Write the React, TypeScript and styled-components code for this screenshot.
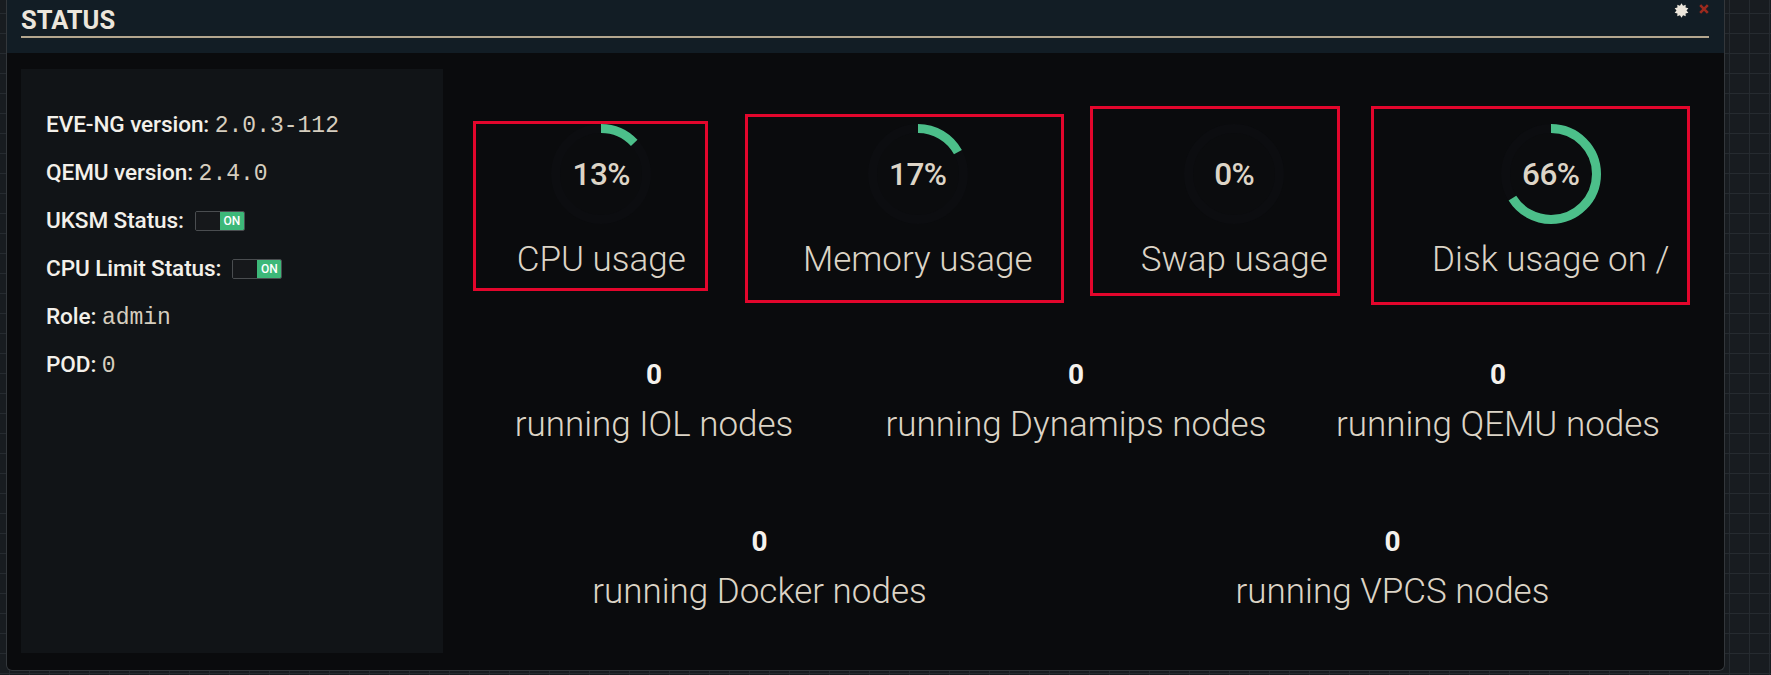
import React from "react";
import styled, { createGlobalStyle } from "styled-components";

const GlobalStyle = createGlobalStyle`
  html, body {
    margin: 0;
    padding: 0;
  }
  body {
    width: 1771px;
    height: 675px;
    overflow: hidden;
    background-color: #181c20;
    background-image:
      linear-gradient(#262b30 1px, transparent 1px),
      linear-gradient(90deg, #262b30 1px, transparent 1px);
    background-size: 20px 20px;
    background-position: 9px 13px;
    font-family: Roboto, "Liberation Sans", sans-serif;
  }
  * { box-sizing: border-box; }
`;

const Panel = styled.section`
  margin-left: 6px;
  width: 1719px;
  height: 671px;
  border: 1px solid #33373b;
  border-top: none;
  border-radius: 0 0 6px 6px;
  overflow: hidden;
  display: flex;
  flex-direction: column;
  background: #0a0b0d;
`;

const Header = styled.header`
  position: relative;
  height: 53px;
  flex: none;
  background: #121d25;
  padding: 5px 15px 0 14px;
`;

const Title = styled.h2`
  margin: 0;
  font-family: Roboto, "Liberation Sans", sans-serif;
  font-weight: 700;
  font-size: 25.5px;
  line-height: 30px;
  color: #ece6dc;
  padding-bottom: 1px;
  border-bottom: 2px solid #b3a68e;
`;

const Tools = styled.div`
  position: absolute;
  top: 2px;
  right: 15px;
  display: flex;
  align-items: flex-start;
  gap: 10px;
`;

const Body = styled.div`
  flex: 1;
  display: grid;
  grid-template-columns: 422px 1fr;
  padding: 16px 15px 17px 14px;
`;

const InfoBox = styled.div`
  background: #111417;
  padding: 32px 0 0 25px;
`;

const InfoRow = styled.div`
  height: 48px;
  line-height: 48px;
  font-family: Roboto, "Liberation Sans", sans-serif;
  font-weight: 500;
  font-size: 22.6px;
  letter-spacing: -0.1px;
  color: #f3f0ea;
  white-space: nowrap;
`;

const Mono = styled.span`
  font-family: "Liberation Mono", "DejaVu Sans Mono", monospace;
  font-weight: 400;
  font-size: 23px;
  letter-spacing: 0;
  color: #d6cebf;
`;

const Toggle = styled.span`
  display: inline-flex;
  width: 50px;
  height: 20px;
  margin-left: 11px;
  border: 1px solid #4a4d50;
  border-radius: 2px;
  overflow: hidden;
  vertical-align: -2px;
`;

const ToggleOff = styled.span`
  flex: 1;
  background: #16181b;
`;

const ToggleOn = styled.span`
  flex: 1;
  background: #3db879;
  color: #ffffff;
  font-family: Roboto, "Liberation Sans", sans-serif;
  font-size: 12px;
  font-weight: 500;
  line-height: 18px;
  letter-spacing: 0;
  text-align: center;
`;

const Stats = styled.div`
  padding-top: 55px;
  display: flex;
  flex-direction: column;
`;

const Row = styled.div<{ $cols: number; $gap: number }>`
  display: grid;
  grid-template-columns: repeat(${(p) => p.$cols}, 1fr);
  margin-top: ${(p) => p.$gap}px;
`;

const GaugeCell = styled.div`
  position: relative;
  display: flex;
  flex-direction: column;
  align-items: center;
`;

const Dial = styled.div`
  display: grid;
  width: 100px;
  height: 100px;
  place-items: center;
  & > * {
    grid-area: 1 / 1;
  }
`;

const Percent = styled.span`
  font-family: Roboto, "Liberation Sans", sans-serif;
  font-weight: 500;
  font-size: 31.5px;
  line-height: 32px;
  letter-spacing: -0.5px;
  color: #ddd5c7;
  margin-top: 2px;
`;

const BigLabel = styled.div<{ $top: number }>`
  margin-top: ${(p) => p.$top}px;
  font-family: Roboto, "Liberation Sans", sans-serif;
  font-weight: 300;
  font-size: 35px;
  line-height: 40px;
  color: #dcd4c6;
  white-space: nowrap;
  text-align: center;
`;

const Mark = styled.div<{ $l: number; $t: number; $w: number; $h: number }>`
  position: absolute;
  left: ${(p) => p.$l}px;
  top: ${(p) => p.$t}px;
  width: ${(p) => p.$w}px;
  height: ${(p) => p.$h}px;
  border: 3px solid #e3062c;
  pointer-events: none;
`;

const NodeStat = styled.div`
  display: flex;
  flex-direction: column;
  align-items: center;
`;

const Count = styled.div`
  font-family: Roboto, "Liberation Sans", sans-serif;
  font-weight: 700;
  font-size: 28px;
  line-height: 34px;
  color: #f5f2ec;
`;

const Gear = () => {
  const pts: string[] = [];
  const n = 10;
  for (let i = 0; i < n * 2; i++) {
    const r = i % 2 === 0 ? 7.2 : 5.0;
    const a = (Math.PI * i) / n;
    pts.push(`${(7.5 + r * Math.sin(a)).toFixed(2)},${(7.5 - r * Math.cos(a)).toFixed(2)}`);
  }
  return (
    <svg width="15" height="15" viewBox="0 0 15 15" style={{ marginTop: 1 }}>
      <polygon points={pts.join(" ")} fill="#ece6dc" />
    </svg>
  );
};

const Close = () => (
  <svg width="10" height="10" viewBox="0 0 10 10" style={{ marginTop: 2 }}>
    <path d="M1.2 1.2 L8.8 8.8 M8.8 1.2 L1.2 8.8" stroke="#9c2a1e" strokeWidth="2.6" />
  </svg>
);

const R = 45.5;
const C = 2 * Math.PI * R;

const Arc = ({ pct }: { pct: number }) => (
  <svg width="100" height="100" viewBox="0 0 100 100">
    <circle cx="50" cy="50" r={R} fill="#0b0c0e" stroke="#0c0d10" strokeWidth="9" />
    {pct > 0 && (
      <circle
        cx="50"
        cy="50"
        r={R}
        fill="none"
        stroke="#4cbf8a"
        strokeWidth="9"
        strokeDasharray={`${(C * pct) / 100} ${C}`}
        transform="rotate(-90 50 50)"
      />
    )}
  </svg>
);

const gauges = [
  { label: "CPU usage", pct: 13, m: { l: 30, t: -3, w: 235, h: 170 } },
  { label: "Memory usage", pct: 17, m: { l: -15, t: -10, w: 319, h: 189 } },
  { label: "Swap usage", pct: 0, m: { l: 14, t: -18, w: 250, h: 190 } },
  { label: "Disk usage on /", pct: 66, m: { l: -22, t: -18, w: 319, h: 199 } },
];

const nodes1 = ["running IOL nodes", "running Dynamips nodes", "running QEMU nodes"];
const nodes2 = ["running Docker nodes", "running VPCS nodes"];

export default function App() {
  return (
    <>
      <GlobalStyle />
      <Panel>
        <Header>
          <Title>STATUS</Title>
          <Tools>
            <Gear />
            <Close />
          </Tools>
        </Header>
        <Body>
          <InfoBox>
            <InfoRow>
              EVE-NG version: <Mono>2.0.3-112</Mono>
            </InfoRow>
            <InfoRow>
              QEMU version: <Mono>2.4.0</Mono>
            </InfoRow>
            <InfoRow>
              UKSM Status:
              <Toggle>
                <ToggleOff />
                <ToggleOn>ON</ToggleOn>
              </Toggle>
            </InfoRow>
            <InfoRow>
              CPU Limit Status:
              <Toggle>
                <ToggleOff />
                <ToggleOn>ON</ToggleOn>
              </Toggle>
            </InfoRow>
            <InfoRow>
              Role: <Mono>admin</Mono>
            </InfoRow>
            <InfoRow>
              POD: <Mono>0</Mono>
            </InfoRow>
          </InfoBox>
          <Stats>
            <Row $cols={4} $gap={0}>
              {gauges.map((g) => (
                <GaugeCell key={g.label}>
                  <Dial>
                    <Arc pct={g.pct} />
                    <Percent>{g.pct}%</Percent>
                  </Dial>
                  <BigLabel $top={16}>{g.label}</BigLabel>
                  <Mark $l={g.m.l} $t={g.m.t} $w={g.m.w} $h={g.m.h} />
                </GaugeCell>
              ))}
            </Row>
            <Row $cols={3} $gap={78}>
              {nodes1.map((n) => (
                <NodeStat key={n}>
                  <Count>0</Count>
                  <BigLabel $top={13}>{n}</BigLabel>
                </NodeStat>
              ))}
            </Row>
            <Row $cols={2} $gap={80}>
              {nodes2.map((n) => (
                <NodeStat key={n}>
                  <Count>0</Count>
                  <BigLabel $top={13}>{n}</BigLabel>
                </NodeStat>
              ))}
            </Row>
          </Stats>
        </Body>
      </Panel>
    </>
  );
}
